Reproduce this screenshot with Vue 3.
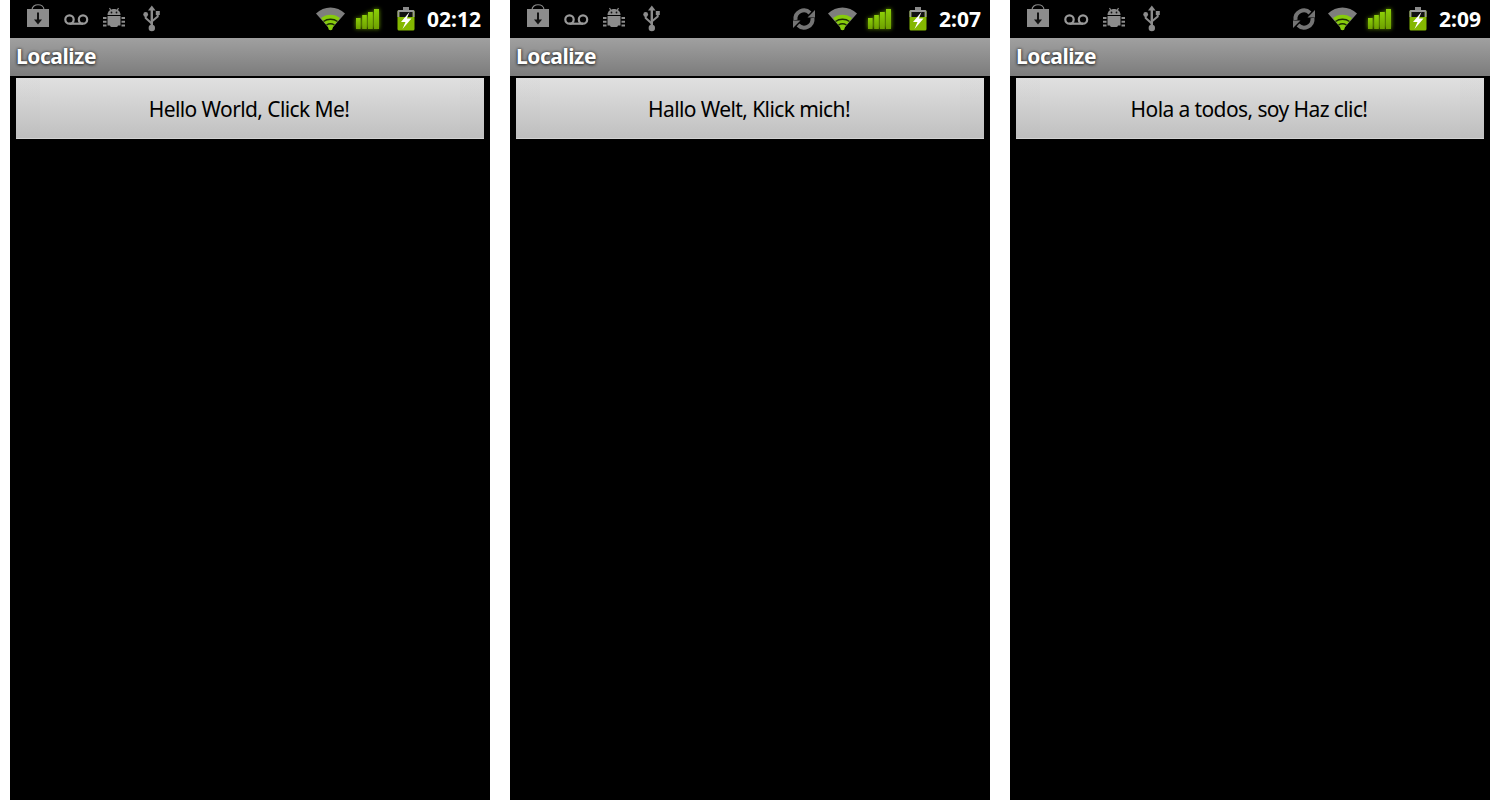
<script setup>
const phones = [
  { time: '02:12', label: 'Hello World, Click Me!', sync: false },
  { time: '2:07', label: 'Hallo Welt, Klick mich!', sync: true },
  { time: '2:09', label: 'Hola a todos, soy Haz clic!', sync: true },
]
</script>

<template>
  <div class="page">
    <section v-for="p in phones" :key="p.time" class="phone">
      <header class="status">
        <div class="group">
          <svg class="ico" viewBox="0 0 38 38">
            <path d="M13 10C13 3 25 3 25 10" fill="none" stroke="#8a8a8a" stroke-width="1.2" />
            <rect x="8" y="9" width="22" height="18" fill="#8c8c8c" />
            <path d="M19 12.5V21" stroke="#111" stroke-width="2" />
            <path d="M15 19.5H23L19 24.5Z" fill="#111" />
          </svg>
          <svg class="ico" viewBox="0 0 38 38">
            <g fill="none" stroke="#999" stroke-width="2.2">
              <circle cx="12.5" cy="19.5" r="4.2" />
              <circle cx="26" cy="19.5" r="4.2" />
              <path d="M12.5 23.7H26" />
            </g>
          </svg>
          <svg class="ico" viewBox="0 0 38 38">
            <g fill="#8c8c8c">
              <path d="M12.5 15C12.5 7 25.5 7 25.5 15Z" />
              <rect x="12.5" y="16" width="13" height="9.5" />
              <rect x="15" y="24" width="8" height="3" rx="1.4" />
            </g>
            <path d="M14.5 8L16.2 11M23.5 8L21.8 11" stroke="#8c8c8c" stroke-width="1.2" />
            <path d="M8 18H11.5M8 21.7H11.5M8 25.5H11.5M26.5 18H30M26.5 21.7H30M26.5 25.5H30" stroke="#8c8c8c" stroke-width="2" />
            <circle cx="16.5" cy="12.5" r="0.9" fill="#111" />
            <circle cx="21.5" cy="12.5" r="0.9" fill="#111" />
          </svg>
          <svg class="ico" viewBox="0 0 38 38">
            <path d="M18.8 8V27" stroke="#8c8c8c" stroke-width="2.4" />
            <path d="M15 10.5L18.8 5.5L22.6 10.5Z" fill="#8c8c8c" />
            <path d="M12.7 15V18L18.8 23.5M24.7 14V16.5L18.8 21.5" fill="none" stroke="#8c8c8c" stroke-width="2" />
            <circle cx="12.7" cy="14.5" r="2.4" fill="#8c8c8c" />
            <rect x="22.8" y="11" width="4" height="4" fill="#8c8c8c" />
            <circle cx="18.8" cy="28" r="3.2" fill="#8c8c8c" />
          </svg>
        </div>
        <div class="group">
          <svg v-if="p.sync" class="ico" viewBox="0 0 38 38">
            <g fill="none" stroke="#747474" stroke-width="4">
              <path d="M10.5 20A8.5 8.5 0 0 1 25 13" />
              <path d="M27.5 18A8.5 8.5 0 0 1 13 25" />
            </g>
            <path d="M30 10V17.5H22.5Z" fill="#747474" />
            <path d="M8 28V20.5H15.5Z" fill="#747474" />
          </svg>
          <svg class="ico" viewBox="0 0 38 38">
            <path d="M5 13.5C13 5.5 26 5.5 34 13.5L19.5 30Z" fill="#7e7e7e" />
            <path d="M10 18C15.5 13.5 23.5 13.5 29 18L19.5 30Z" fill="#86cc0c" />
            <path d="M12.5 21.5C16.5 18.5 22.5 18.5 26.5 21.5M15.5 25C17.8 23.6 21.2 23.6 23.5 25" fill="none" stroke="#1c2c02" stroke-width="1.4" />
            <circle cx="19.5" cy="28" r="2.2" fill="#86cc0c" />
          </svg>
          <svg class="ico bars" viewBox="0 0 38 38">
            <defs>
              <linearGradient id="greenFill" x1="0" y1="0" x2="0" y2="1">
                <stop offset="0" stop-color="#8ccf08" />
                <stop offset="1" stop-color="#6ea000" />
              </linearGradient>
            </defs>
            <g fill="url(#greenFill)">
              <rect x="7" y="18" width="4.6" height="11" />
              <rect x="13.2" y="15" width="4.6" height="14" />
              <rect x="19" y="12" width="4.8" height="17" />
              <rect x="25" y="9" width="5" height="20" />
            </g>
          </svg>
          <svg class="ico" viewBox="0 0 38 38">
            <rect x="16" y="7" width="6" height="3" fill="#8a8a8a" />
            <rect x="10.5" y="10" width="17" height="20.5" rx="1.5" fill="#84b800" />
            <path d="M10.5 17V11.5Q10.5 10 12 10H26Q27.5 10 27.5 11.5V17H25.5V12H12.5V17Z" fill="#9a9a9a" />
            <rect x="12.5" y="12" width="13" height="5" fill="#111" />
            <path d="M22.5 12L14 22H18.5L15.5 29L24.5 18.5H19.8Z" fill="#fff" />
          </svg>
          <span class="clock">{{ p.time }}</span>
        </div>
      </header>
      <div class="titlebar">Localize</div>
      <button class="btn" type="button">{{ p.label }}</button>
    </section>
  </div>
</template>

<style>
html, body { margin: 0; background: #fff; }
</style>

<style scoped>
.page {
  display: flex;
  gap: 20px;
  padding: 0 10px;
  height: 800px;
  overflow: hidden;
  font-family: "Noto Sans", "Open Sans", sans-serif;
}
.phone {
  width: 480px;
  height: 800px;
  background: #000;
  display: flex;
  flex-direction: column;
}
.status {
  height: 38px;
  flex: none;
  display: flex;
  justify-content: space-between;
  padding: 0 9px;
}
.group {
  display: flex;
  align-items: center;
}
.ico {
  width: 38px;
  height: 38px;
  flex: none;
}
.bars {
  filter: drop-shadow(0 0 2px #6a9c00);
}
.clock {
  margin-left: 2px;
  color: #fff;
  font-size: 21px;
  font-weight: 700;
  line-height: 38px;
}
.titlebar {
  height: 38px;
  flex: none;
  box-sizing: border-box;
  padding-left: 6px;
  background: linear-gradient(#a0a0a0, #7c7c7c);
  color: #fff;
  font-size: 21px;
  font-weight: 700;
  letter-spacing: -0.45px;
  line-height: 37px;
  text-shadow: 0 0 3px #333, 0 1px 3px #333;
}
.btn {
  margin: 2px 6px 0;
  height: 61px;
  flex: none;
  box-sizing: border-box;
  border: 0;
  border-bottom: 1px solid #d2d2d2;
  padding: 2px 2px 0 0;
  background:
    linear-gradient(90deg, rgba(0, 0, 0, 0.012) 0 24px, transparent 24px calc(100% - 24px), rgba(0, 0, 0, 0.012) calc(100% - 24px)),
    linear-gradient(#e0e0e0, #c0c0c0);
  color: #000;
  font: inherit;
  font-size: 21px;
  letter-spacing: -0.6px;
}
</style>
